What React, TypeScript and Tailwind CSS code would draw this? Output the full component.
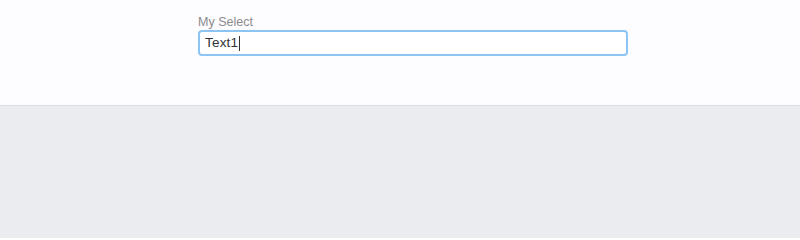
import React from 'react'

export default function App() {
  return (
    <div className="w-[800px] h-[238px] flex flex-col bg-[#ebecef]" style={{ fontFamily: '"Liberation Sans", Arial, sans-serif' }}>
      <div className="h-[106px] bg-[#fdfcfe] border-b border-[#dedde2] pl-[198px] pt-[15px]">
        <div className="w-[430px] flex flex-col">
          <label className="text-[12.5px] leading-[15px] text-[#8b8a8f]">My Select</label>
          <div className="h-[26px] rounded-[4px] border-2 border-[#8cc4f3] bg-white flex items-center px-[5px]">
            <span className="text-[13.5px] text-[#333336] tracking-[0.2px]">Text1</span>
            <span className="w-[1px] h-[15px] bg-[#333] ml-[1px]" />
          </div>
        </div>
      </div>
      <div className="flex-1" />
    </div>
  )
}
